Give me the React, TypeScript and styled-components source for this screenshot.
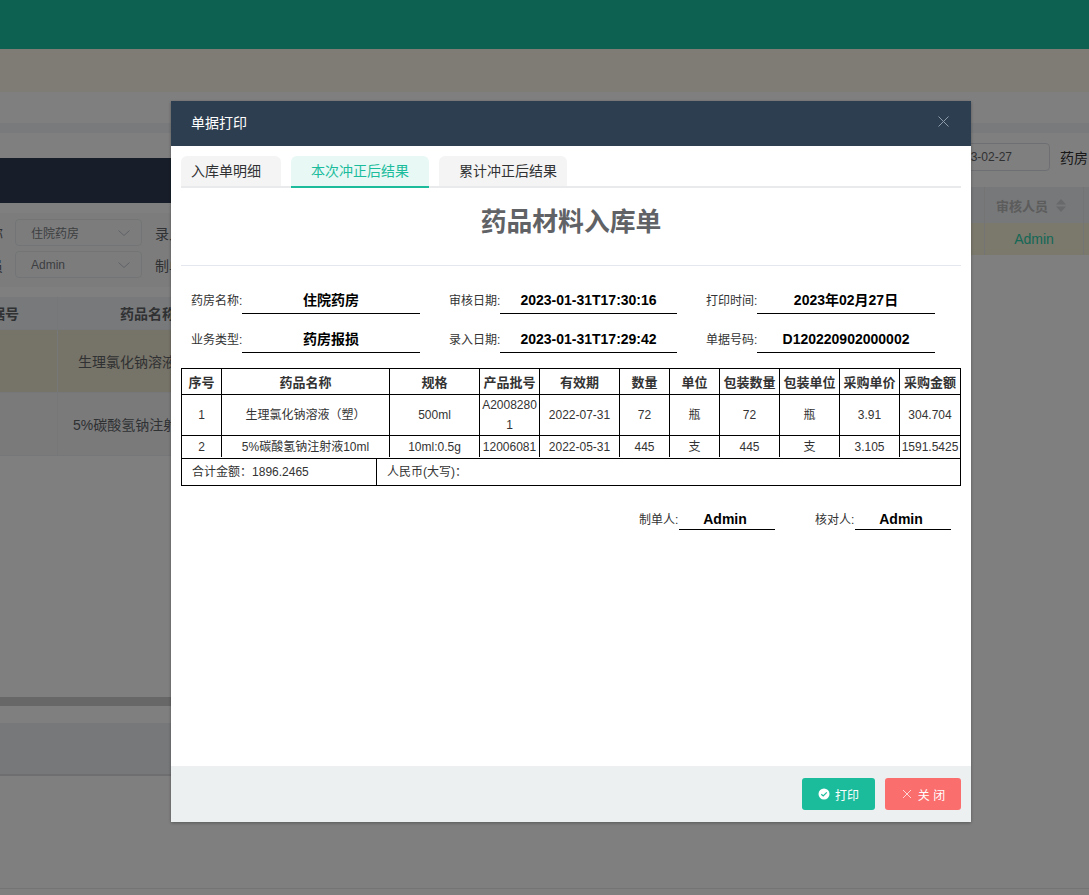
import React from "react";
import styled, { createGlobalStyle } from "styled-components";

const Global = createGlobalStyle`
  html, body { margin: 0; padding: 0; height: 100%; background: #fff; }
  body { font-family: "Liberation Sans", "Noto Sans CJK SC", sans-serif; overflow: hidden; }
  * { box-sizing: border-box; }
`;

const Page = styled.div`
  position: relative;
  width: 1089px;
  height: 895px;
  overflow: hidden;
  display: flex;
  flex-direction: column;
`;
const TopBar = styled.div`height: 49px; background: #18c2a0; flex: none;`;
const Notice = styled.div`height: 43px; background: #fff7ea; flex: none;`;
const Crumbs = styled.div`height: 31px; flex: none; background: #ffffff;`;
const Gutter = styled.div`height: 10px; flex: none; background: #f2f4f6;`;

const Workspace = styled.div`
  flex: none;
  height: 643px;
  display: flex;
`;
const PageBottom = styled.div`
  height: 113px;
  flex: none;
  border-bottom: 1px solid #e8e8ea;
`;
const LeftPane = styled.div`
  width: 560px;
  flex: none;
  display: flex;
  flex-direction: column;
  padding-top: 25px;
`;
const NavyBar = styled.div`height: 45px; flex: none; background: #2e3c52;`;
const FilterPanel = styled.div`
  margin-top: 10px;
  height: 74px;
  flex: none;
  background: #f8f9fa;
  padding: 6px 0 0 0;
  display: flex;
  flex-direction: column;
  gap: 5px;
`;
const FilterRow = styled.div`
  display: flex;
  align-items: center;
  height: 27px;
`;
const ClippedLabel = styled.span`
  width: 3px;
  margin-right: 12px;
  flex: none;
  overflow: hidden;
  direction: rtl;
  white-space: nowrap;
  font-size: 14px;
  color: #606266;
`;
const Select = styled.div`
  width: 127px;
  height: 27px;
  flex: none;
  border: 1px solid #e6e8ec;
  border-radius: 4px;
  background: #f8f9fa;
  padding: 0 11px 0 15px;
  display: flex;
  align-items: center;
  justify-content: space-between;
  font-size: 12px;
  color: #7a7d82;
  svg { color: #c0c4cc; }
`;
const FilterLabel = styled.span`
  margin-left: 13px;
  font-size: 14px;
  color: #606266;
  white-space: nowrap;
`;
const BackTable = styled.div`
  margin-top: 10px;
  display: grid;
  grid-template-columns: 58px 1fr;
  grid-template-rows: 33px 63px 63px;
`;
const BackCell = styled.div<{ $tone: "head" | "warm" | "plain"; $left?: boolean }>`
  display: flex;
  align-items: center;
  justify-content: ${(p) => (p.$left ? "flex-end" : "flex-start")};
  padding-right: ${(p) => (p.$left ? 38 : 0)}px;
  font-size: 14px;
  font-weight: ${(p) => (p.$tone === "head" ? 700 : 400)};
  color: ${(p) => (p.$tone === "head" ? "#5f6266" : "#606266")};
  background: ${(p) => (p.$tone === "head" ? "#f1f3f6" : p.$tone === "warm" ? "#ede6d0" : "#f5f5f7")};
  border-bottom: 1px solid #eceef2;
  border-right: 1px solid #eceef2;
  white-space: nowrap;
  overflow: hidden;
`;
const CellText = styled.span<{ $pad: number }>`padding-left: ${(p) => p.$pad}px;`;
const HScroll = styled.div`
  margin-top: auto;
  height: 9px;
  flex: none;
  background: #cecece;
`;
const ScrollArea = styled.div`
  flex: 1;
  display: flex;
  flex-direction: column;
`;
const FootGap = styled.div`height: 17px; flex: none;`;
const FootBand = styled.div`
  height: 53px;
  flex: none;
  background: #eef0f2;
  border-bottom: 2px solid #dcdde0;
`;

const RightPane = styled.div`
  flex: 1;
  padding-top: 10px;
  display: flex;
  flex-direction: column;
`;
const RightTools = styled.div`
  height: 28px;
  margin-bottom: 16px;
  display: flex;
  justify-content: flex-end;
  align-items: center;
  gap: 10px;
`;
const DateBox = styled.div`
  width: 180px;
  height: 28px;
  border: 1px solid #dcdfe6;
  border-radius: 4px;
  font-size: 12px;
  color: #606266;
  display: flex;
  align-items: center;
  justify-content: flex-end;
  padding-right: 37px;
  flex: none;
`;
const RightLabel = styled.span`
  flex: none;
  width: 29px;
  white-space: nowrap;
  font-size: 14px;
  color: #303133;
`;
const RightHead = styled.div`
  height: 36px;
  background: #eef0f3;
  display: flex;
  justify-content: flex-end;
  padding-right: 5px;
  font-size: 13px;
  font-weight: 700;
  color: #b8b8b8;
`;
const RightRow = styled.div`
  height: 32px;
  background: #f6f0d8;
  display: flex;
  justify-content: flex-end;
  padding-right: 5px;
  font-size: 14px;
  color: #2ad0ac;
`;
const ApproverCell = styled.div<{ $head?: boolean }>`
  width: 100px;
  display: flex;
  align-items: center;
  justify-content: ${(p) => (p.$head ? "flex-start" : "center")};
  padding-left: ${(p) => (p.$head ? 11 : 0)}px;
  gap: 8px;
  border-left: 1px solid #e8e8e8;
  border-right: 1px solid #e8e8e8;
`;

const Overlay = styled.div`
  position: absolute;
  inset: 0;
  background: rgba(0, 0, 0, 0.5);
`;
const Dialog = styled.div`
  position: absolute;
  left: 171px;
  top: 101px;
  width: 800px;
  height: 721px;
  background: #fff;
  box-shadow: 0 1px 3px rgba(0, 0, 0, 0.3);
  display: flex;
  flex-direction: column;
`;
const DialogHead = styled.div`
  height: 45px;
  flex: none;
  background: #2d3e50;
  color: #fff;
  font-size: 14px;
  padding: 0 22px 3px 20px;
  display: flex;
  align-items: center;
  justify-content: space-between;
  svg { color: #8f9ba8; margin-bottom: 2px; }
`;
const DialogBody = styled.div`
  flex: 1;
  padding: 10px 10px 0;
`;
const Tabs = styled.div`
  display: flex;
  gap: 10px;
  height: 32px;
  border-bottom: 2px solid #e8eaec;
  width: 780px;
`;
const Tab = styled.div<{ $active?: boolean; $padL: number; $padR: number }>`
  height: 32px;
  padding: 0 ${(p) => p.$padR}px 0 ${(p) => p.$padL}px;
  border-radius: 6px 6px 0 0;
  background: ${(p) => (p.$active ? "#e8f8f5" : "#f4f4f5")};
  color: ${(p) => (p.$active ? "#1abc9c" : "#303133")};
  border-bottom: 2px solid ${(p) => (p.$active ? "#1abc9c" : "#e8eaec")};
  font-size: 14px;
  line-height: 30px;
  white-space: nowrap;
`;
const Title = styled.h1`
  margin: 0;
  height: 78px;
  padding-top: 16px;
  font-size: 25.8px;
  line-height: 36px;
  font-weight: 700;
  color: #606266;
  text-align: center;
  border-bottom: 1px solid #e4e7ed;
`;
const InfoGrid = styled.div`
  display: grid;
  grid-template-columns: 258px 257px 257px;
  grid-auto-rows: 39px;
  padding: 9px 0 0 10px;
  height: 102px;
`;
const InfoItem = styled.div<{ $narrow: boolean }>`
  display: grid;
  grid-template-columns: 51px ${(p) => (p.$narrow ? 177 : 178)}px;
  align-items: end;
  height: 39px;
`;
const InfoLabel = styled.span`
  font-size: 12px;
  color: #333;
  line-height: 26px;
  white-space: nowrap;
`;
const InfoValue = styled.span`
  border-bottom: 1px solid #000;
  text-align: center;
  font-size: 14px;
  font-weight: 700;
  color: #000;
  line-height: 26px;
  height: 27px;
  white-space: nowrap;
`;
const TableFrame = styled.div`
  width: 780px;
  border: 1px solid #000;
`;
const SheetTable = styled.table`
  width: 778px;
  table-layout: fixed;
  border-collapse: separate;
  border-spacing: 0;
`;
const Th = styled.th`
  height: 26px;
  padding: 0;
  font-size: 13px;
  font-weight: 700;
  color: #333;
  border-right: 1px solid #000;
  border-bottom: 1px solid #000;
  text-align: center;
  white-space: nowrap;
  &:last-child { border-right: none; }
`;
const Td = styled.td<{ $tall?: boolean }>`
  height: ${(p) => (p.$tall ? 41 : 21)}px;
  padding: 0;
  font-size: 12px;
  line-height: 20px;
  color: #333;
  text-align: center;
  word-break: break-all;
  border-right: 1px solid #000;
  border-bottom: ${(p) => (p.$tall ? "1px solid #000" : "none")};
  &:last-child { border-right: none; }
`;
const SumRow = styled.div`
  margin-top: 1px;
  height: 27px;
  display: flex;
  border-top: 1px solid #000;
  font-size: 12px;
  color: #333;
  line-height: 26px;
`;
const SumLeft = styled.div`
  width: 195px;
  flex: none;
  padding-left: 10px;
  border-right: 1px solid #000;
`;
const SumRight = styled.div`
  padding-left: 10px;
`;
const Signers = styled.div`
  display: flex;
  justify-content: flex-end;
  gap: 40px;
  padding: 23px 10px 0 0;
`;
const Signer = styled.div`
  display: flex;
  align-items: flex-end;
`;
const SignerLabel = styled.span`
  width: 40px;
  font-size: 12px;
  color: #333;
  line-height: 19px;
  white-space: nowrap;
`;
const SignerValue = styled.span`
  width: 96px;
  height: 21px;
  border-bottom: 1px solid #000;
  padding-right: 4px;
  text-align: center;
  font-size: 14px;
  font-weight: 700;
  color: #000;
  line-height: 20px;
`;
const DialogFoot = styled.div`
  height: 56px;
  flex: none;
  background: #ecf0f1;
  padding: 12px 10px 0 0;
  display: flex;
  justify-content: flex-end;
  gap: 10px;
`;
const ActionButton = styled.button<{ $bg: string; $w: number }>`
  width: ${(p) => p.$w}px;
  height: 32px;
  border: none;
  border-radius: 3px;
  background: ${(p) => p.$bg};
  color: #fff;
  font-family: inherit;
  font-size: 12px;
  padding: 0;
  display: flex;
  align-items: center;
  justify-content: center;
  gap: 5px;
  white-space: pre;
`;

const columns = [40, 168, 90, 60, 80, 50, 50, 60, 60, 60, 60];
const headers = ["序号", "药品名称", "规格", "产品批号", "有效期", "数量", "单位", "包装数量", "包装单位", "采购单价", "采购金额"];
const rows = [
  ["1", "生理氯化钠溶液\uFF08塑\uFF09", "500ml", "A20082801", "2022-07-31", "72", "瓶", "72", "瓶", "3.91", "304.704"],
  ["2", "5%碳酸氢钠注射液10ml", "10ml:0.5g", "12006081", "2022-05-31", "445", "支", "445", "支", "3.105", "1591.5425"],
];
const info = [
  ["药房名称:", "住院药房"],
  ["审核日期:", "2023-01-31T17:30:16"],
  ["打印时间:", "2023年02月27日"],
  ["业务类型:", "药房报损"],
  ["录入日期:", "2023-01-31T17:29:42"],
  ["单据号码:", "D120220902000002"],
];

const Chevron = () => (
  <svg width="12" height="12" viewBox="0 0 12 12" fill="none" stroke="currentColor" strokeWidth="1">
    <path d="M.5 3.5 6 8.5 11.5 3.5" />
  </svg>
);
const SortCaret = () => (
  <svg width="10" height="13" viewBox="0 0 10 13" fill="#d0d2d6">
    <path d="M5 0 10 5.5H0z" />
    <path d="M5 13 0 7.5h10z" />
  </svg>
);

export default function App() {
  return (
    <Page>
      <Global />
      <TopBar />
      <Notice />
      <Crumbs />
      <Gutter />
      <Workspace>
        <LeftPane>
          <NavyBar />
          <FilterPanel>
            <FilterRow>
              <ClippedLabel>称</ClippedLabel>
              <Select>住院药房<Chevron /></Select>
              <FilterLabel>录入日期</FilterLabel>
            </FilterRow>
            <FilterRow>
              <ClippedLabel>员</ClippedLabel>
              <Select>Admin<Chevron /></Select>
              <FilterLabel>制单人员</FilterLabel>
            </FilterRow>
          </FilterPanel>
          <ScrollArea>
            <BackTable>
              <BackCell $tone="head" $left><span>据号</span></BackCell>
              <BackCell $tone="head"><CellText $pad={62}>药品名称</CellText></BackCell>
              <BackCell $tone="warm" />
              <BackCell $tone="warm"><CellText $pad={20}>生理氯化钠溶液{"\uFF08"}塑{"\uFF09"}</CellText></BackCell>
              <BackCell $tone="plain" />
              <BackCell $tone="plain"><CellText $pad={15}>5%碳酸氢钠注射液10ml</CellText></BackCell>
            </BackTable>
            <HScroll />
          </ScrollArea>
          <FootGap />
          <FootBand />
        </LeftPane>
        <RightPane>
          <RightTools>
            <DateBox>2023-02-27</DateBox>
            <RightLabel>药房</RightLabel>
          </RightTools>
          <RightHead>
            <ApproverCell $head>审核人员<SortCaret /></ApproverCell>
          </RightHead>
          <RightRow>
            <ApproverCell>Admin</ApproverCell>
          </RightRow>
        </RightPane>
      </Workspace>
      <PageBottom />
      <Overlay />
      <Dialog>
        <DialogHead>
          单据打印
          <svg width="11" height="11" viewBox="0 0 11 11" fill="none" stroke="currentColor" strokeWidth="1">
            <path d="M.5.5 10.5 10.5M10.5.5.5 10.5" />
          </svg>
        </DialogHead>
        <DialogBody>
          <Tabs>
            <Tab $padL={10} $padR={20}>入库单明细</Tab>
            <Tab $active $padL={20} $padR={20}>本次冲正后结果</Tab>
            <Tab $padL={20} $padR={10}>累计冲正后结果</Tab>
          </Tabs>
          <Title>药品材料入库单</Title>
          <InfoGrid>
            {info.map(([label, value], i) => (
              <InfoItem key={label} $narrow={i % 3 === 1}>
                <InfoLabel>{label}</InfoLabel>
                <InfoValue>{value}</InfoValue>
              </InfoItem>
            ))}
          </InfoGrid>
          <TableFrame>
            <SheetTable>
              <colgroup>
                {columns.map((w, i) => (
                  <col key={i} width={w} />
                ))}
              </colgroup>
              <thead>
                <tr>
                  {headers.map((h) => (
                    <Th key={h}>{h}</Th>
                  ))}
                </tr>
              </thead>
              <tbody>
                {rows.map((row, r) => (
                  <tr key={r}>
                    {row.map((cell, c) => (
                      <Td key={c} $tall={r === 0}>{cell}</Td>
                    ))}
                  </tr>
                ))}
              </tbody>
            </SheetTable>
            <SumRow>
              <SumLeft>合计金额{"\uFF1A"}1896.2465</SumLeft>
              <SumRight>人民币(大写){"\uFF1A"}</SumRight>
            </SumRow>
          </TableFrame>
          <Signers>
            <Signer>
              <SignerLabel>制单人:</SignerLabel>
              <SignerValue>Admin</SignerValue>
            </Signer>
            <Signer>
              <SignerLabel>核对人:</SignerLabel>
              <SignerValue>Admin</SignerValue>
            </Signer>
          </Signers>
        </DialogBody>
        <DialogFoot>
          <ActionButton $bg="#1abc9c" $w={73}>
            <svg width="12" height="12" viewBox="0 0 12 12">
              <circle cx="6" cy="6" r="5.5" fill="#fff" />
              <path d="M3.3 6.2 5.2 8 8.8 4.4" fill="none" stroke="#1abc9c" strokeWidth="1.2" />
            </svg>
            打印
          </ActionButton>
          <ActionButton $bg="#fb6e6e" $w={76}>
            <svg width="12" height="12" viewBox="0 0 12 12" fill="none" stroke="#ffd6d6" strokeWidth="1">
              <path d="M2 2 10 10M10 2 2 10" />
            </svg>
            关 闭
          </ActionButton>
        </DialogFoot>
      </Dialog>
    </Page>
  );
}
